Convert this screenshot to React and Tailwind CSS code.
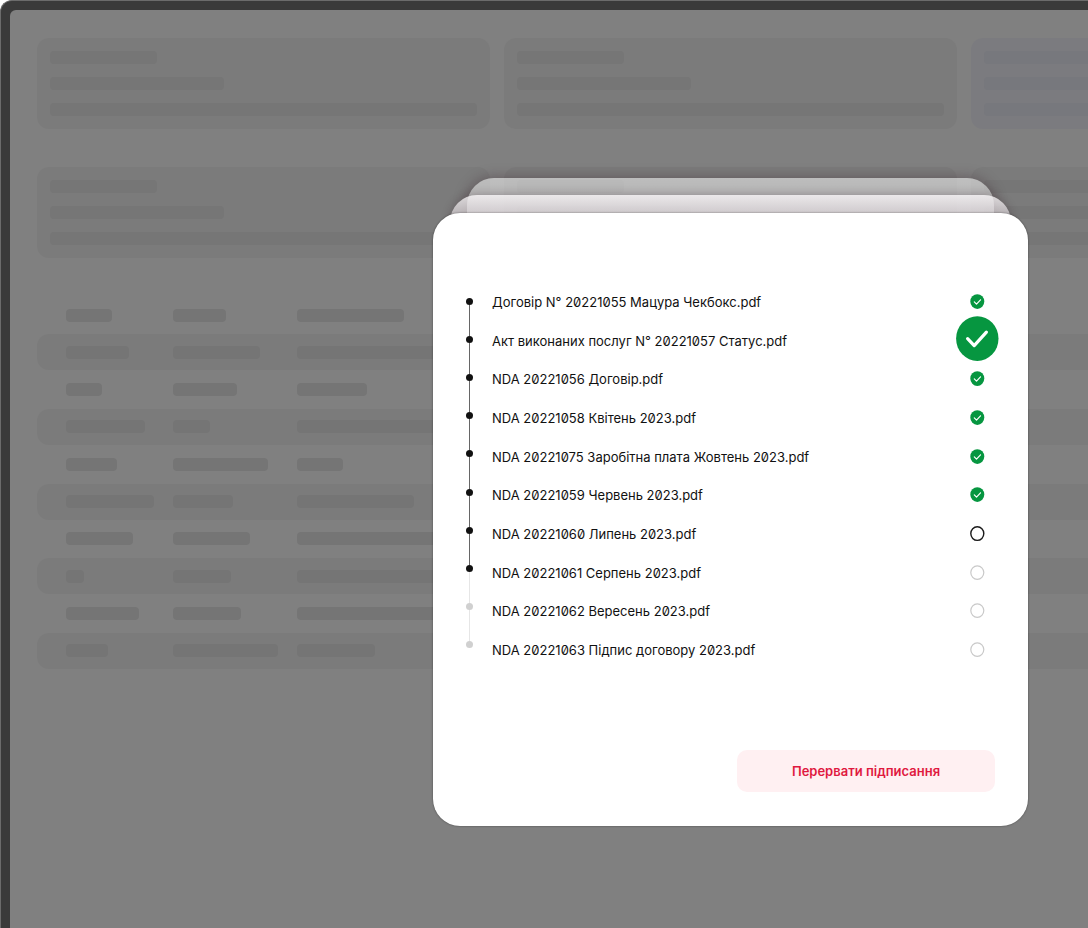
import React from 'react';
import clsx from 'clsx';

const documents = [
  { name: 'Договір N° 20221055 Мацура Чекбокс.pdf', status: 'signed' },
  { name: 'Акт виконаних послуг N° 20221057 Статус.pdf', status: 'current' },
  { name: 'NDA 20221056 Договір.pdf', status: 'signed' },
  { name: 'NDA 20221058 Квітень 2023.pdf', status: 'signed' },
  { name: 'NDA 20221075 Заробітна плата Жовтень 2023.pdf', status: 'signed' },
  { name: 'NDA 20221059 Червень 2023.pdf', status: 'signed' },
  { name: 'NDA 20221060 Липень 2023.pdf', status: 'next' },
  { name: 'NDA 20221061 Серпень 2023.pdf', status: 'waiting' },
  { name: 'NDA 20221062 Вересень 2023.pdf', status: 'waiting' },
  { name: 'NDA 20221063 Підпис договору 2023.pdf', status: 'waiting' },
];

// How many dots of the timeline are already reached
const REACHED = 8;

// Placeholder bar widths for every table row
const tableRows = [
  [46, 53, 107],
  [63, 87, 180],
  [36, 64, 70],
  [79, 37, 180],
  [51, 95, 46],
  [88, 60, 117],
  [67, 77, 180],
  [18, 58, 180],
  [73, 68, 180],
  [42, 105, 78],
];

const SkeletonCard = ({ tinted }) => (
  <div
    className={clsx(
      'flex w-[453px] shrink-0 flex-col gap-[13px] rounded-xl p-[13px]',
      tinted ? 'bg-[#7b7b7f]' : 'bg-[#7b7b7b]'
    )}
  >
    <div className={clsx('h-[13px] w-[107px] rounded', tinted ? 'bg-[#77787d]' : 'bg-[#767676]')} />
    <div className={clsx('h-[13px] w-[174px] rounded', tinted ? 'bg-[#77787d]' : 'bg-[#767676]')} />
    <div className={clsx('h-[13px] rounded', tinted ? 'bg-[#77787d]' : 'bg-[#767676]')} />
  </div>
);

const Backdrop = () => (
  <div aria-hidden="true" className="pt-7 pl-[27px]">
    <div className="flex gap-[14px]">
      <SkeletonCard />
      <SkeletonCard />
      <SkeletonCard tinted />
    </div>
    <div className="mt-[38px] flex gap-[14px]">
      <SkeletonCard />
      <SkeletonCard />
      <SkeletonCard />
    </div>

    {/* Table */}
    <div className="mt-[39px] flex h-[372px] flex-col justify-between">
      {tableRows.map((row, i) => (
        <div
          key={i}
          className={clsx(
            'grid h-9 grid-cols-[107px_124px_1fr] items-center rounded-l-xl pl-[29px]',
            i % 2 === 1 && 'bg-[#7b7b7b]'
          )}
        >
          {row.map((width, j) => (
            <div key={j} className="h-[13px] rounded bg-[#757575]" style={{ width }} />
          ))}
        </div>
      ))}
    </div>
  </div>
);

const StatusIcon = ({ status }) => {
  if (status === 'signed') {
    return (
      <svg role="img" aria-label="Підписано" className="h-4 w-4" viewBox="0 0 16 16" fill="none">
        <ellipse cx="8.3" cy="7.6" rx="7" ry="7.4" fill="#069640" />
        <path d="M5.3 7.9l2.2 2.2 4-4.3" stroke="#fff" strokeWidth="1.2" strokeLinecap="round" strokeLinejoin="round" />
      </svg>
    );
  }
  if (status === 'current') {
    return (
      <svg role="img" aria-label="Підписується" className="-my-3 h-[46px] w-11 shrink-0 -translate-y-0.5" viewBox="0 0 44 46" fill="none">
        <ellipse cx="22.3" cy="22.6" rx="21.2" ry="22.3" fill="#069640" />
        <path d="M12.6 22.6l6.6 7 12.2-13.4" stroke="#fff" strokeWidth="3.2" strokeLinecap="round" strokeLinejoin="round" />
      </svg>
    );
  }
  return (
    <svg role="img" aria-label="Очікує" className="h-4 w-4" viewBox="0 0 16 16" fill="none">
      <ellipse
        cx="8.3"
        cy="7.6"
        rx="6.5"
        ry="6.8"
        stroke={status === 'next' ? '#1a1a1a' : '#c9c9c9'}
        strokeWidth={status === 'next' ? 1.4 : 1.2}
      />
    </svg>
  );
};

const Timeline = () => (
  <div aria-hidden="true" className="mt-1.5 flex h-[350px] w-[7px] flex-col">
    {documents.map((doc, i) => (
      <div
        key={doc.name}
        className={clsx('flex flex-col items-center', i < documents.length - 1 ? 'flex-1' : 'shrink-0')}
      >
        <div className={clsx('h-[7px] w-[7px] rounded-full', i < REACHED ? 'bg-[#111111]' : 'bg-[#d0d0d0]')} />
        {i < documents.length - 1 && (
          <div className={clsx('w-px flex-1', i < REACHED - 1 ? 'bg-[#666666]' : 'bg-[#e6e6e6]')} />
        )}
      </div>
    ))}
  </div>
);

const SigningDialog = () => (
  <div className="w-full max-w-[595px]">
    {/* Sheets that peek out behind the dialog */}
    <div className="mx-[34px] -mb-[31px] h-12 rounded-t-[27px] bg-linear-to-b from-white/50 to-white/40 to-60% shadow-[0_0_14px_rgba(50,25,35,0.4)]" />
    <div className="relative mx-[17px] -mb-[30px] h-12 rounded-t-[27px] bg-linear-to-b from-[#f8f5f7]/80 to-[#dcd3d8]/60 to-45% shadow-[0_0_10px_rgba(50,25,35,0.3)]" />

    <div
      role="dialog"
      aria-label="Підписання документів"
      className="relative rounded-[27px] bg-white pt-[79px] pr-[29px] pb-[34px] pl-[33px] shadow-[0_0_2px_rgba(0,0,0,0.5)]"
    >
      <div className="flex gap-[19px]">
        <Timeline />
        <ul className="flex h-[368px] flex-1 flex-col justify-between">
          {documents.map((doc) => (
            <li key={doc.name} className="flex h-5 items-center justify-between">
              <span className="text-[13px] leading-5 text-[#111111] slashed-zero">{doc.name}</span>
              <span className="flex h-5 w-11 items-center justify-center">
                <StatusIcon status={doc.status} />
              </span>
            </li>
          ))}
        </ul>
      </div>
      <div className="mt-[90px] mr-1 flex justify-end">
        <button
          type="button"
          className="h-[42px] w-[258px] rounded-[10px] bg-[#fff0f2] text-[13px] leading-5 font-semibold text-[#e0193f]"
        >
          Перервати підписання
        </button>
      </div>
    </div>
  </div>
);

const App = () => {
  return (
    <div className="bg-white font-['Inter',sans-serif]">
      <div className="relative flex min-h-screen overflow-hidden rounded-tl-xl border-t border-l border-[#6b6b6b] bg-[#3a3a3a] pt-[9px] pl-[9px]">
        <div className="min-w-0 flex-1 overflow-hidden rounded-tl-md bg-[#808080]">
          <Backdrop />
        </div>
        <div className="absolute inset-0 flex items-start justify-end pt-[177px] pr-[60px]">
          <SigningDialog />
        </div>
      </div>
    </div>
  );
};

export default App;
